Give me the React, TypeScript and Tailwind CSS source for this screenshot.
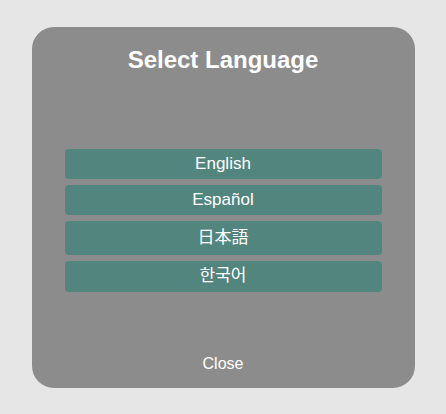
import React from "react";

const languages = [
  { label: "English", h: "h-[30px]" },
  { label: "Español", h: "h-[30px]" },
  { label: "日本語", h: "h-[34px]" },
  { label: "한국어", h: "h-[31px]" },
];

export default function App() {
  return (
    <div
      className="min-h-screen w-full flex items-center justify-center bg-[#e6e6e6]"
      style={{ fontFamily: '"Liberation Sans", Arial, "Noto Sans CJK KR", "Noto Sans CJK JP", sans-serif' }}
    >
      <div className="w-[383px] h-[361px] bg-[#8c8c8c] rounded-[22px] flex flex-col items-center pt-[17px] pb-[14px]">
        <h2 className="text-[24px] font-bold text-white leading-[32px]">Select Language</h2>

        <div className="w-[317px] mt-[73px] flex flex-col gap-[6px]">
          {languages.map((lang) => (
            <button
              key={lang.label}
              className={`w-full ${lang.h} flex items-center justify-center bg-[#52857e] text-white text-[17px] rounded-[4px]`}
            >
              {lang.label}
            </button>
          ))}
        </div>

        <button className="mt-auto text-white text-[16px] leading-[20px]">Close</button>
      </div>
    </div>
  );
}
